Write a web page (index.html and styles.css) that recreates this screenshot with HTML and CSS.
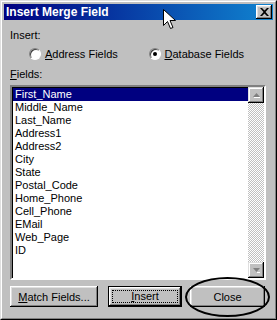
FILE: index.html
```html
<!DOCTYPE html>
<html>
    <head>
        <title>Insert Merge Field</title>
        <meta charset="UTF-8">
        <link rel="stylesheet" href="styles.css">
    </head>
    <body>
        <div class="janela">
            <div class="moldura">
                <div class="titulo">
                    <span>Insert Merge Field</span>
                    <button class="botao-fechar">
                        <svg width="9" height="8" viewBox="0 0 9 8"><path d="M0 0h2l2.5 2.5L7 0h2L5.5 4 9 8H7L4.5 5.5 2 8H0l3.5-4z" fill="#000"/></svg>
                    </button>
                </div>
                <div class="conteudo">
                    <div class="rotulo">Insert:</div>
                    <div class="opcoes">
                        <label class="opcao"><span class="radio"></span><span><u>A</u>ddress Fields</span></label>
                        <label class="opcao"><span class="radio marcado"></span><span><u>D</u>atabase Fields</span></label>
                    </div>
                    <div class="rotulo campos"><u>F</u>ields:</div>
                    <div class="lista">
                        <ul class="itens">
                            <li class="selecionado">First_Name</li>
                            <li>Middle_Name</li>
                            <li>Last_Name</li>
                            <li>Address1</li>
                            <li>Address2</li>
                            <li>City</li>
                            <li>State</li>
                            <li>Postal_Code</li>
                            <li>Home_Phone</li>
                            <li>Cell_Phone</li>
                            <li>EMail</li>
                            <li>Web_Page</li>
                            <li>ID</li>
                        </ul>
                        <div class="rolagem">
                            <div class="seta"><svg width="7" height="5" viewBox="0 0 7 5"><path d="M3.5 0L7 4H0z" fill="#808080"/><path d="M1 4.5h6" stroke="#fff"/></svg></div>
                            <div class="trilho"></div>
                            <div class="seta"><svg width="7" height="5" viewBox="0 0 7 5"><path d="M0 0h7L3.5 4z" fill="#808080"/><path d="M4 4.5h3" stroke="#fff"/></svg></div>
                        </div>
                    </div>
                    <div class="botoes">
                        <button class="botao match"><u>M</u>atch Fields...</button>
                        <button class="botao inserir"><span class="foco"><u>I</u>nsert</span></button>
                        <button class="botao fechar">Close</button>
                    </div>
                </div>
            </div>
        </div>
        <svg class="cursor" width="14" height="22" viewBox="0 0 14 22"><path d="M0.5 0.5v16l4-4 3 7 2.5-1-3-7h5.5z" fill="#fff" stroke="#000"/></svg>
        <div class="circulo"></div>
    </body>
</html>
```

FILE: styles.css
```css
* {
    margin: 0;
    padding: 0;
    box-sizing: border-box;
    font-family: "Liberation Sans", Arial, sans-serif;
    font-size: 11px;
    color: #000;
}
body {
    background-color: #c0c0c0;
    width: 277px;
    height: 320px;
    position: relative;
    overflow: hidden;
}
.janela {
    width: 277px;
    height: 320px;
    border: 1px solid;
    border-color: #dfdfdf #000 #000 #dfdfdf;
    background-color: #c0c0c0;
}
.moldura {
    height: 100%;
    border: 1px solid;
    border-color: #fff #808080 #808080 #fff;
    padding: 2px 2px 2px 2px;
}
.titulo {
    display: flex;
    align-items: center;
    justify-content: space-between;
    height: 16px;
    padding: 0 1px 0 2px;
    background: linear-gradient(to right, #000080, #1084d0);
}
.titulo span {
    color: #fff;
    font-weight: bold;
    font-size: 12px;
}
.botao-fechar {
    display: flex;
    align-items: center;
    justify-content: center;
    width: 16px;
    height: 14px;
    border: none;
    background-color: #c0c0c0;
    box-shadow: inset -1px -1px #000, inset 1px 1px #fff, inset -2px -2px #808080, inset 2px 2px #dfdfdf;
}
.conteudo {
    padding: 0 5px 0 4px;
}
.rotulo {
    line-height: 13px;
    margin-top: 9px;
    padding-left: 2px;
}
.rotulo.campos {
    margin-top: 8px;
}
.opcoes {
    display: flex;
    margin-top: 5px;
    padding-left: 21px;
    height: 13px;
}
.opcao {
    display: flex;
    align-items: center;
    gap: 4px;
    width: 125px;
}
.radio {
    display: inline-block;
    width: 12px;
    height: 12px;
    border-radius: 50%;
    background-color: #fff;
    border: 1px solid;
    border-color: #808080 #fff #fff #808080;
    box-shadow: inset 1px 1px #404040;
    position: relative;
}
.radio.marcado::after {
    content: "";
    position: absolute;
    left: 3px;
    top: 3px;
    width: 4px;
    height: 4px;
    border-radius: 50%;
    background-color: #000;
}
.lista {
    display: flex;
    margin-top: 4px;
    margin-left: 2px;
    height: 195px;
    width: 256px;
    border: 2px solid;
    border-color: #808080 #fff #fff #808080;
    box-shadow: inset 1px 1px #000;
    background-color: #fff;
    padding: 1px 0 0 1px;
}
.itens {
    list-style: none;
    flex: 1;
}
.itens li {
    height: 13px;
    line-height: 13px;
    padding-left: 2px;
}
.itens li.selecionado {
    background-color: #000080;
    color: #fff;
}
.rolagem {
    display: flex;
    flex-direction: column;
    width: 16px;
    margin-top: -1px;
}
.seta {
    display: flex;
    align-items: center;
    justify-content: center;
    height: 16px;
    background-color: #c0c0c0;
    box-shadow: inset -1px -1px #000, inset 1px 1px #dfdfdf, inset -2px -2px #808080, inset 2px 2px #fff;
}
.trilho {
    flex: 1;
    background-image: conic-gradient(#fff 25%, #c0c0c0 0 50%, #fff 0 75%, #c0c0c0 0);
    background-size: 2px 2px;
}
.botoes {
    display: flex;
    margin-top: 6px;
    margin-left: 2px;
}
.botao {
    height: 21px;
    border: none;
    background-color: #c0c0c0;
    box-shadow: inset -1px -1px #000, inset 1px 1px #fff, inset -2px -2px #808080, inset 2px 2px #dfdfdf;
}
.match {
    width: 88px;
}
.inserir {
    width: 74px;
    margin-left: 10px;
    border: 1px solid #000;
    padding: 3px;
}
.foco {
    display: block;
    height: 13px;
    line-height: 11px;
    border: 1px dotted #000;
}
.fechar {
    width: 75px;
    margin-left: 8px;
}
.cursor {
    position: absolute;
    left: 163px;
    top: 9px;
    width: 14px;
    height: 22px;
}
.circulo {
    position: absolute;
    left: 185px;
    top: 277px;
    width: 85px;
    height: 40px;
    border: 2px solid #000;
    border-radius: 50%;
}
```
